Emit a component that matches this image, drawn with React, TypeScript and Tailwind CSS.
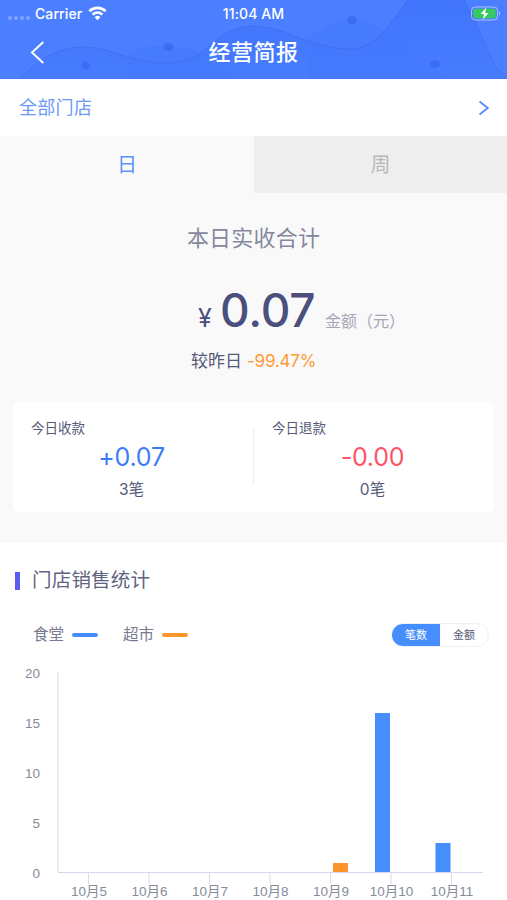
interface DaySales {
  label: string
  canteen: number
  market: number
}

const SALES: DaySales[] = [
  { label: "10月5", canteen: 0, market: 0 },
  { label: "10月6", canteen: 0, market: 0 },
  { label: "10月7", canteen: 0, market: 0 },
  { label: "10月8", canteen: 0, market: 0 },
  { label: "10月9", canteen: 0, market: 1 },
  { label: "10月10", canteen: 16, market: 0 },
  { label: "10月11", canteen: 3, market: 0 },
]

const Y_TICKS = [20, 15, 10, 5, 0]

const CHART = { left: 58, right: 483, bottom: 212, step: 60.5, unit: 10, bar: 15 }

function StatusBar() {
  return (
    <div className="relative flex h-[26px] items-center justify-between pr-[6px] pl-2 text-[14px] font-medium text-white">
      <div className="flex items-center">
        <div className="mt-[9px] mr-[5px] flex gap-[2px]">
          <span className="h-1 w-1 rounded-full bg-white/30" />
          <span className="h-1 w-1 rounded-full bg-white/30" />
          <span className="h-1 w-1 rounded-full bg-white/30" />
          <span className="h-1 w-1 rounded-full bg-white/30" />
        </div>
        <span className="tracking-[0.1px]">Carrier</span>
        <svg width="19" height="15" viewBox="0 0 19 15" className="ml-[6px]" aria-hidden="true">
          <path d="M1.4 5.2a11.6 11.6 0 0 1 16.2 0" fill="none" stroke="#fff" strokeWidth="2.7" />
          <path d="M4.6 8.6a7 7 0 0 1 9.8 0" fill="none" stroke="#fff" strokeWidth="2.5" />
          <path d="M9.5 14.2 6.6 11.2a4.1 4.1 0 0 1 5.8 0z" fill="#fff" />
        </svg>
      </div>
      <svg width="30" height="15" viewBox="0 0 30 15" aria-hidden="true">
        <rect x="0.5" y="1" width="26" height="13" rx="3.6" fill="none" stroke="#fff" strokeOpacity="0.5" />
        <rect x="2.3" y="2.8" width="22.4" height="9.4" rx="2" fill="#35cb5c" />
        <path d="M28 5.3c1.5.5 1.5 3.9 0 4.4z" fill="#fff" fillOpacity="0.5" />
        <path d="M15.2 1.6 9.6 8h3.4l-1.2 5.4L17.6 7h-3.5z" fill="#fff" />
      </svg>
      <span className="absolute inset-x-0 text-center tracking-[0.1px]">11:04 AM</span>
    </div>
  )
}

function Header() {
  return (
    <header className="relative h-[79px] overflow-hidden bg-[#4b7fff]">
      <svg className="absolute inset-0" width="507" height="79" viewBox="0 0 507 79" aria-hidden="true">
        <defs>
          <linearGradient id="wave" x1="0" y1="0" x2="0" y2="1">
            <stop offset="0" stopColor="#3c70fa" stopOpacity="0.75" />
            <stop offset="1" stopColor="#447aff" stopOpacity="0.6" />
          </linearGradient>
        </defs>
        <path d="M128 54C145 44 172 42 200 53L240 79H128z" fill="#4275fa" fillOpacity="0.35" />
        <path d="M308 38C325 24 342 18 355 19C385 23 397 46 420 55L450 79H308z" fill="#4275fa" fillOpacity="0.4" />
        <path
          d="M19 79C38 61 57 47 83 47C111 47 133 64 168 63C211 62 213 27 253 26C288 27 310 49 352 49C378 47 389 24 408 0H464C482 29 489 65 507 79z"
          fill="url(#wave)"
        />
        <path
          d="M19 79C38 61 57 47 83 47C111 47 133 64 168 63C211 62 213 27 253 26C288 27 310 49 352 49C378 47 389 24 408 0M464 0C482 29 489 65 507 79"
          fill="none"
          stroke="#3468e4"
          strokeOpacity="0.55"
        />
        <g fill="#3468ee" fillOpacity="0.7">
          <ellipse cx="85.500" cy="65.500" rx="4.500" ry="4" />
          <ellipse cx="168.500" cy="47" rx="5" ry="4" />
          <ellipse cx="352" cy="20" rx="5" ry="4" />
          <ellipse cx="435" cy="64" rx="5" ry="4" />
        </g>
      </svg>
      <StatusBar />
      <div className="relative flex h-[53px] items-center justify-center">
        <svg className="absolute top-[15px] left-[30px]" width="15" height="23" viewBox="0 0 15 23" aria-hidden="true">
          <path d="M13.300 1 2 11.500 13.300 22" fill="none" stroke="#fff" strokeWidth="1.900" />
        </svg>
        <h1 className="text-[22px] font-medium tracking-[0.5px] text-white">经营简报</h1>
      </div>
    </header>
  )
}

interface StatProps {
  title: string
  amount: string
  count: string
  color: string
}

function Stat({ title, amount, count, color }: StatProps) {
  return (
    <div className="flex h-full flex-1 flex-col items-center pt-[17px]">
      <p className="w-full pl-[18px] text-[13.500px] leading-[18px] text-[#565978]">{title}</p>
      <p className={`mt-[5px] pr-[3px] text-[25px] leading-[30px] tracking-[-0.2px] ${color}`}>{amount}</p>
      <p className="mt-[7px] pr-[3px] text-[15.500px] leading-[22px] text-[#565978]">{count}</p>
    </div>
  )
}

function Summary() {
  return (
    <section className="h-[350px] bg-[#f9f9f9] pt-[33px]">
      <h2 className="text-center text-[22px] leading-[24px] tracking-[0.2px] text-[#85889d]">本日实收合计</h2>
      <div className="mt-[36px] flex h-[48px] items-baseline pl-[198px] leading-[48px]">
        <span className="w-[22px] text-[25px] text-[#4a4f7c]">¥</span>
        <span className="w-[105px] text-[46px] font-medium tracking-[-0.2px] text-[#4a4f7c]">0.07</span>
        <span className="text-[16px] text-[#a5a7b3]">金额（元）</span>
      </div>
      <p className="mt-[15px] flex gap-[5px] pl-[191px] text-[17px] leading-[24px] text-[#565978]">
        <span>较昨日</span>
        <span className="tracking-[-0.2px] text-[#ff9a35]">-99.47%</span>
      </p>
      <div className="mx-[13px] mt-[29px] flex h-[110px] items-center rounded-md bg-white">
        <Stat title="今日收款" amount="+0.07" count="3笔" color="text-[#3d7cf8]" />
        <div className="h-[56px] w-px bg-[#eeeeee]" />
        <Stat title="今日退款" amount="-0.00" count="0笔" color="text-[#f95567]" />
      </div>
    </section>
  )
}

function SalesChart() {
  const { left, right, bottom, step, unit, bar } = CHART
  return (
    <svg
      className="block font-['Liberation_Sans','Noto_Sans_CJK_SC',sans-serif]"
      width="507"
      height="240"
      viewBox="0 0 507 240"
      fontSize="13.500"
      fill="#868b99"
    >
      <line x1={left} x2={left} y1="12" y2={bottom} stroke="#e9e9ee" strokeWidth="1.500" />
      {Y_TICKS.map((t) => (
        <text key={t} x="40" y={bottom + 5.5 - t * unit} textAnchor="end">
          {t}
        </text>
      ))}
      {SALES.map((d, i) => {
        const x = 88.5 + i * step
        return (
          <g key={d.label}>
            <line x1={x} x2={x} y1={bottom} y2={bottom + 12} stroke="#d9daea" />
            {d.canteen > 0 && (
              <rect x={x - 16} y={bottom + 1 - d.canteen * unit} width={bar} height={d.canteen * unit - 1} fill="#468efb" />
            )}
            {d.market > 0 && (
              <rect x={x + 2.5} y={bottom + 1 - d.market * unit} width={bar} height={d.market * unit - 1} fill="#ff942c" />
            )}
            <text x={x + 0.5} y="235.500" textAnchor="middle">
              {d.label}
            </text>
          </g>
        )
      })}
      <line x1={left} x2={right} y1={bottom + 0.5} y2={bottom + 0.5} stroke="#d6d6ef" />
    </svg>
  )
}

export default function App() {
  return (
    <div className="h-[900px] w-[507px] overflow-hidden bg-white font-['Inter','Noto_Sans_CJK_SC',sans-serif]">
      <Header />

      <div className="flex h-[57px] items-center justify-between pr-[17px] pl-[19px]">
        <span className="text-[18px] tracking-[0.3px] text-[#6a9af6]">全部门店</span>
        <svg width="12" height="16" viewBox="0 0 12 16" aria-hidden="true">
          <path d="M1.500 1.500 9.800 8 1.500 14.500" fill="none" stroke="#5b8ef5" strokeWidth="1.900" />
        </svg>
      </div>

      <div className="flex h-[57px] text-[20px]">
        <div className="flex w-[254px] items-center justify-center bg-[#fafafa] text-[#5b96f6]">日</div>
        <div className="flex flex-1 items-center justify-center bg-[#eeeeee] text-[#b9b9b9]">周</div>
      </div>

      <Summary />

      <section>
        <div className="flex h-[76px] items-center pl-[15px]">
          <span className="mr-[12px] h-[18px] w-[5px] bg-[#5d5cf2]" />
          <h2 className="text-[19.500px] tracking-[0.2px] text-[#61647f]">门店销售统计</h2>
        </div>
        <div className="flex h-[32px] items-center pr-[18px] pl-[33px] text-[15.500px] text-[#777a90]">
          <span>食堂</span>
          <span className="ml-[8px] h-1 w-[26px] rounded-sm bg-[#468efb]" />
          <span className="ml-[25px]">超市</span>
          <span className="ml-[8px] h-1 w-[26px] rounded-sm bg-[#ff942c]" />
          <div className="ml-auto flex h-[24px] w-[98px] overflow-hidden rounded-full border border-[#f0f0f4] text-[11px]">
            <span className="flex w-[48px] items-center justify-center bg-[#468efb] text-white">笔数</span>
            <span className="flex flex-1 items-center justify-center text-[#565978]">金额</span>
          </div>
        </div>
        <div className="mt-[9px]">
          <SalesChart />
        </div>
      </section>
    </div>
  )
}
